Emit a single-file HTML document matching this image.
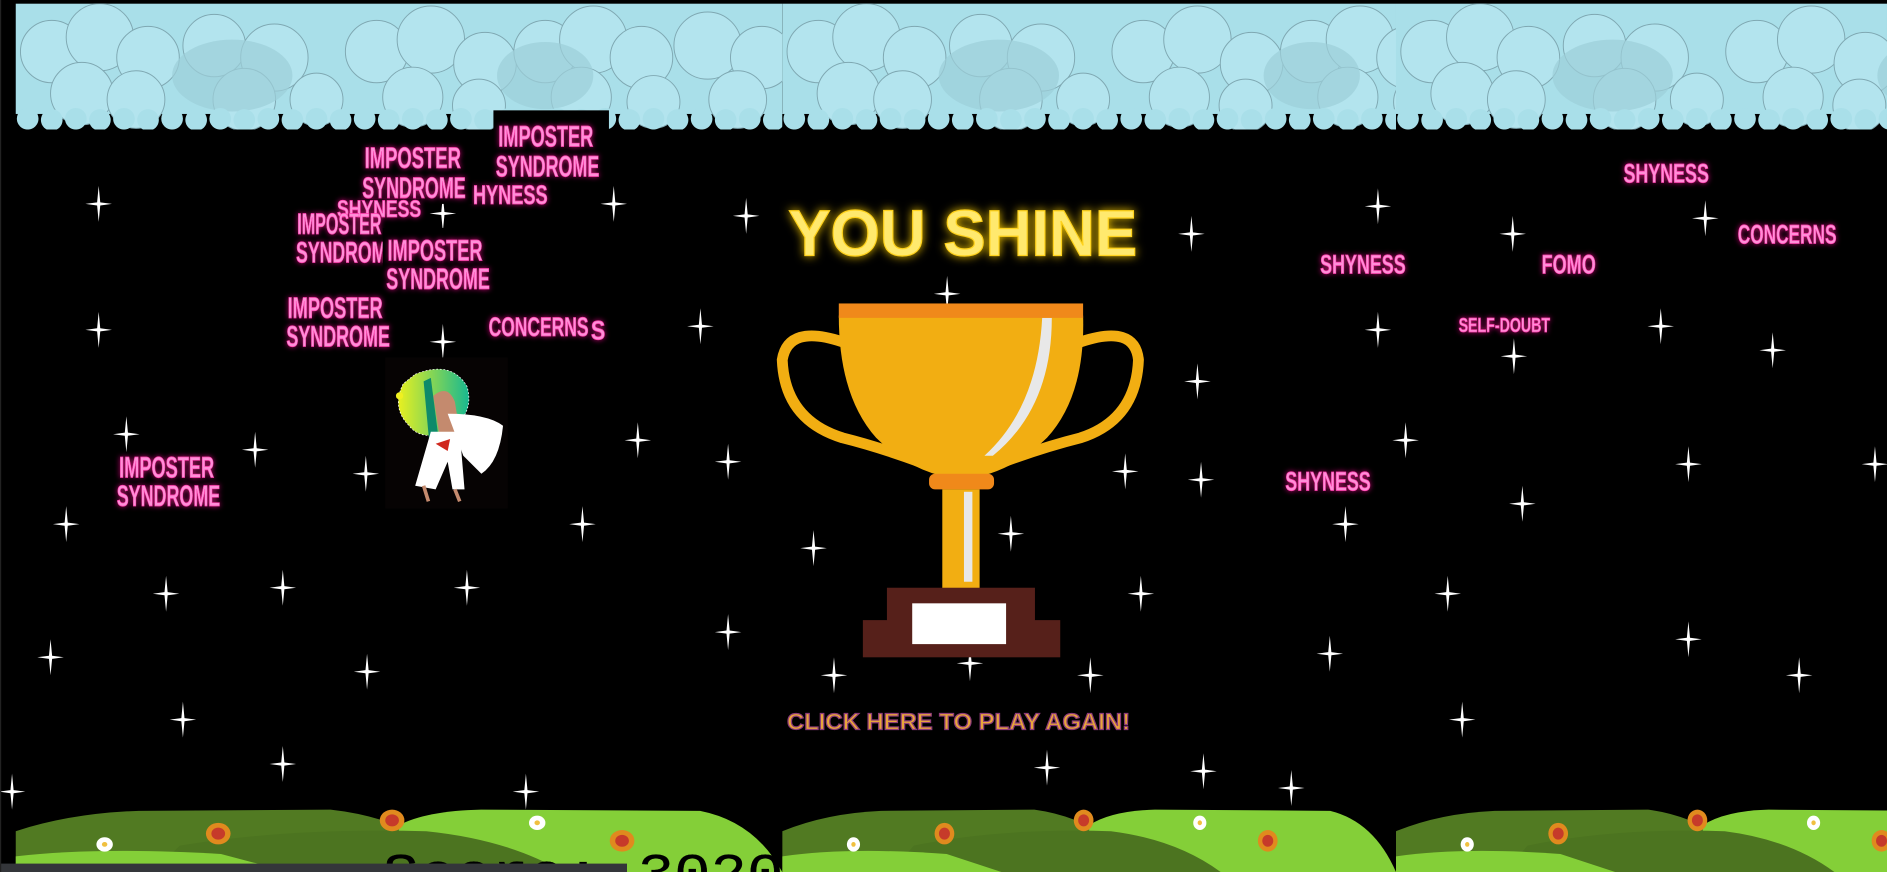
<!DOCTYPE html>
<html><head><meta charset="utf-8"><style>
html,body{margin:0;padding:0;background:#000;overflow:hidden}
svg{display:block}
.p{font-family:"Liberation Sans Narrow","Liberation Sans",sans-serif;font-weight:bold;fill:#ff8fd8;stroke:#ff3fae;stroke-width:.6;filter:url(#pg)}
</style></head><body>
<svg width="1887" height="872" viewBox="0 0 1568 727" preserveAspectRatio="none" xmlns="http://www.w3.org/2000/svg">
<defs>
<filter id="pg" x="-20%" y="-40%" width="140%" height="180%"><feGaussianBlur in="SourceGraphic" stdDeviation="2.2" result="b"/><feFlood flood-color="#ff1493" flood-opacity=".8"/><feComposite in2="b" operator="in" result="g"/><feMerge><feMergeNode in="g"/><feMergeNode in="SourceGraphic"/></feMerge></filter>
<filter id="yg" x="-20%" y="-50%" width="140%" height="200%"><feGaussianBlur in="SourceGraphic" stdDeviation="4" result="b"/><feFlood flood-color="#ffd000" flood-opacity=".9"/><feComposite in2="b" operator="in" result="g"/><feMerge><feMergeNode in="g"/><feMergeNode in="SourceGraphic"/></feMerge></filter>
<path id="st" d="M0,-15 L1.3,-1.3 L11,0 L1.3,1.3 L0,15 L-1.3,1.3 L-11,0 L-1.3,-1.3Z" fill="#fff"/>
<g id="cl">
 <rect x="0" y="0" width="640" height="92" fill="#a9dfe9"/>
 <g fill="#b3e4ee" stroke="#7fa8b2" stroke-width=".8">
 <circle cx="30" cy="40" r="26"/><circle cx="70" cy="28" r="28"/><circle cx="110" cy="45" r="26"/><circle cx="55" cy="75" r="26"/><circle cx="100" cy="80" r="24"/>
 <circle cx="165" cy="35" r="26"/><circle cx="215" cy="45" r="28"/><circle cx="190" cy="80" r="26"/><circle cx="250" cy="80" r="22"/>
 <circle cx="300" cy="40" r="26"/><circle cx="345" cy="30" r="28"/><circle cx="390" cy="50" r="26"/><circle cx="330" cy="78" r="25"/><circle cx="385" cy="85" r="22"/>
 <circle cx="440" cy="40" r="26"/><circle cx="480" cy="30" r="28"/><circle cx="520" cy="45" r="26"/><circle cx="470" cy="78" r="25"/><circle cx="530" cy="82" r="22"/>
 <circle cx="575" cy="35" r="28"/><circle cx="620" cy="45" r="26"/><circle cx="600" cy="80" r="24"/>
 </g>
 <g fill="#9ccfd8" opacity=".7"><ellipse cx="180" cy="60" rx="50" ry="30"/><ellipse cx="440" cy="60" rx="40" ry="28"/></g>
 <g fill="#a9dfe9"><circle cx="10" cy="96" r="9"/><circle cx="30" cy="97" r="9"/><circle cx="50" cy="96" r="9"/><circle cx="70" cy="97" r="9"/><circle cx="90" cy="96" r="9"/><circle cx="110" cy="97" r="9"/><circle cx="130" cy="96" r="9"/><circle cx="150" cy="97" r="9"/><circle cx="170" cy="96" r="9"/><circle cx="190" cy="97" r="9"/><circle cx="210" cy="96" r="9"/><circle cx="230" cy="97" r="9"/><circle cx="250" cy="96" r="9"/><circle cx="270" cy="97" r="9"/><circle cx="290" cy="96" r="9"/><circle cx="310" cy="97" r="9"/><circle cx="330" cy="96" r="9"/><circle cx="350" cy="97" r="9"/><circle cx="370" cy="96" r="9"/><circle cx="390" cy="97" r="9"/><circle cx="410" cy="96" r="9"/><circle cx="430" cy="97" r="9"/><circle cx="450" cy="96" r="9"/><circle cx="470" cy="97" r="9"/><circle cx="490" cy="96" r="9"/><circle cx="510" cy="97" r="9"/><circle cx="530" cy="96" r="9"/><circle cx="550" cy="97" r="9"/><circle cx="570" cy="96" r="9"/><circle cx="590" cy="97" r="9"/><circle cx="610" cy="96" r="9"/><circle cx="630" cy="97" r="9"/></g>
</g>
<g id="gr">
 <path d="M0,693 Q40,678 90,676 L230,675 Q270,680 300,700 L300,727 L0,727Z" fill="#517a22"/>
 <path d="M280,727 L280,688 Q300,676 340,675 L500,676 Q540,685 560,727Z" fill="#84cf38"/>
 <path d="M100,727 L120,705 Q200,690 300,693 Q360,700 400,727Z" fill="#4c7420"/>
 <path d="M0,727 L0,714 Q60,706 150,712 L200,727Z" fill="#84cf38"/>
 <g><circle cx="148" cy="695" r="9" fill="#e08a1e"/><circle cx="148" cy="695" r="5" fill="#c63a2a"/>
 <circle cx="275" cy="684" r="9" fill="#e08a1e"/><circle cx="275" cy="684" r="5" fill="#c63a2a"/>
 <circle cx="443" cy="701" r="9" fill="#e08a1e"/><circle cx="443" cy="701" r="5" fill="#c63a2a"/>
 <circle cx="65" cy="704" r="6" fill="#fff"/><circle cx="65" cy="704" r="2" fill="#f0c040"/>
 <circle cx="381" cy="686" r="6" fill="#fff"/><circle cx="381" cy="686" r="2" fill="#f0c040"/></g>
</g>
</defs>
<rect width="1568" height="727" fill="#000"/>
<svg x="13" y="3" width="637" height="105" viewBox="0 0 637 105"><use href="#cl"/></svg>
<svg x="650" y="3" width="510" height="105" viewBox="0 0 510 105"><use href="#cl"/></svg>
<svg x="1160" y="3" width="408" height="105" viewBox="0 0 408 105"><use href="#cl"/></svg>
<g>
<use href="#st" x="82" y="170"/><use href="#st" x="82" y="275"/><use href="#st" x="55" y="437"/><use href="#st" x="138" y="495"/><use href="#st" x="42" y="548"/><use href="#st" x="152" y="600"/><use href="#st" x="235" y="637"/><use href="#st" x="235" y="490"/><use href="#st" x="304" y="395"/><use href="#st" x="305" y="560"/><use href="#st" x="388" y="490"/><use href="#st" x="484" y="437"/><use href="#st" x="530" y="367"/><use href="#st" x="605" y="385"/><use href="#st" x="510" y="170"/><use href="#st" x="368" y="285"/><use href="#st" x="620" y="180"/><use href="#st" x="990" y="195"/><use href="#st" x="995" y="318"/><use href="#st" x="935" y="393"/><use href="#st" x="948" y="495"/><use href="#st" x="840" y="445"/><use href="#st" x="676" y="457"/><use href="#st" x="605" y="527"/><use href="#st" x="693" y="563"/><use href="#st" x="806" y="553"/><use href="#st" x="906" y="563"/><use href="#st" x="1145" y="172"/><use href="#st" x="1145" y="275"/><use href="#st" x="1257" y="195"/><use href="#st" x="1417" y="182"/><use href="#st" x="1473" y="292"/><use href="#st" x="1380" y="272"/><use href="#st" x="1168" y="367"/><use href="#st" x="1118" y="437"/><use href="#st" x="1265" y="420"/><use href="#st" x="1403" y="387"/><use href="#st" x="1558" y="387"/><use href="#st" x="1203" y="495"/><use href="#st" x="1105" y="545"/><use href="#st" x="1403" y="533"/><use href="#st" x="1495" y="563"/><use href="#st" x="1215" y="600"/><use href="#st" x="1258" y="297"/><use href="#st" x="10" y="660"/><use href="#st" x="437" y="660"/><use href="#st" x="1073" y="657"/><use href="#st" x="582" y="272"/><use href="#st" x="212" y="375"/><use href="#st" x="105" y="362"/><use href="#st" x="787" y="245"/><use href="#st" x="368" y="178"/><use href="#st" x="998" y="400"/><use href="#st" x="870" y="640"/><use href="#st" x="1000" y="643"/>
</g>
<svg x="13" y="0" width="637" height="727" viewBox="0 0 560 727" preserveAspectRatio="none"><use href="#gr"/></svg>
<svg x="650" y="0" width="510" height="727" viewBox="0 0 560 727" preserveAspectRatio="none"><use href="#gr"/></svg>
<svg x="1160" y="0" width="408" height="727" viewBox="0 0 448 727" preserveAspectRatio="none"><use href="#gr"/></svg>
<text x="655" y="213" font-family="Liberation Sans, sans-serif" font-weight="bold" font-size="54" textLength="290" lengthAdjust="spacingAndGlyphs" fill="#ffe96e" stroke="#ffd21a" stroke-width="1" filter="url(#yg)">YOU SHINE</text>
<path d="M700,285 Q655,270 650,300 Q652,350 700,365 Q740,375 790,395" fill="none" stroke="#f2ae12" stroke-width="9" stroke-linecap="round"/>
<path d="M898,285 Q943,270 946,300 Q944,350 898,365 Q858,375 808,395" fill="none" stroke="#f2ae12" stroke-width="9" stroke-linecap="round"/>
<path d="M697,263 L900,263 Q902,330 870,365 Q840,395 799,400 Q758,395 728,365 Q697,330 697,263Z" fill="#f2ae12"/>
<path d="M866,265 L874,265 Q874,340 825,380 L818,380 Q862,340 866,265Z" fill="#e8e8e8"/>
<rect x="697" y="253" width="203" height="12" fill="#f0891a"/>
<rect x="772" y="395" width="54" height="13" rx="5" fill="#f0891a"/>
<rect x="783" y="408" width="31" height="84" fill="#f2ae12"/>
<rect x="801" y="410" width="7" height="75" fill="#e8e8e8"/>
<rect x="737" y="490" width="123" height="30" fill="#56201a"/>
<rect x="717" y="517" width="164" height="31" fill="#56201a"/>
<rect x="758" y="503" width="78" height="34" fill="#fff"/>
<text x="654" y="608" font-family="Liberation Sans, sans-serif" font-weight="bold" font-size="19" textLength="285" lengthAdjust="spacingAndGlyphs" fill="#e8a63a" stroke="#8e3c78" stroke-width="1">CLICK HERE TO PLAY AGAIN!</text>
<rect x="320" y="298" width="102" height="126" fill="#060303"/>
<defs><linearGradient id="bl" x1="0" x2="1"><stop offset="0" stop-color="#e8f020"/><stop offset="1" stop-color="#18b890"/></linearGradient></defs>
<path d="M345,312 Q375,300 388,322 Q395,345 372,360 Q350,368 340,355 Q325,340 335,320Z" fill="url(#bl)" stroke="#fff" stroke-width=".6" stroke-dasharray="1.5 1.5"/>
<circle cx="332" cy="330" r="3" fill="#f0f020"/>
<path d="M360,330 Q372,320 378,335 L382,360 L365,362Z" fill="#c48a6e"/>
<path d="M352,318 L358,315 L365,370 L357,372Z" fill="#0e8a6a"/>
<path d="M372,345 Q405,345 418,355 Q415,385 400,395 L385,380Z" fill="#fff"/>
<path d="M358,360 L382,360 L386,408 L376,408 L372,385 L362,408 L345,405Z" fill="#fff"/>
<path d="M362,370 L374,366 L372,376Z" fill="#d0281e"/>
<path d="M352,405 L356,418 M378,408 L382,418" stroke="#c48a6e" stroke-width="3"/>
<!-- words, layered -->
<rect x="410" y="92" width="96" height="68" fill="#000"/>
<g class="p" font-size="25"><text x="393" y="170" textLength="62" lengthAdjust="spacingAndGlyphs" font-size="22">HYNESS</text></g>
<rect x="300" y="112" width="92" height="58" fill="#000"/>
<g class="p" font-size="25">
<text x="303" y="140" textLength="80" lengthAdjust="spacingAndGlyphs">IMPOSTER</text>
<text x="301" y="165" textLength="86" lengthAdjust="spacingAndGlyphs">SYNDROME</text>
<text x="414" y="122" textLength="79" lengthAdjust="spacingAndGlyphs">IMPOSTER</text>
<text x="412" y="147" textLength="86" lengthAdjust="spacingAndGlyphs">SYNDROME</text>
</g>
<rect x="278" y="166" width="72" height="18" fill="#000"/>
<g class="p" font-size="25"><text x="280" y="181" textLength="70" lengthAdjust="spacingAndGlyphs" font-size="20">SHYNESS</text>
<text x="247" y="195" textLength="70" lengthAdjust="spacingAndGlyphs">IMPOSTER</text>
<text x="246" y="219" textLength="75" lengthAdjust="spacingAndGlyphs">SYNDROM</text></g>
<rect x="318" y="190" width="94" height="55" fill="#000"/>
<g class="p" font-size="25">
<text x="322" y="217" textLength="79" lengthAdjust="spacingAndGlyphs">IMPOSTER</text>
<text x="321" y="241" textLength="86" lengthAdjust="spacingAndGlyphs">SYNDROME</text>
<text x="239" y="265" textLength="79" lengthAdjust="spacingAndGlyphs">IMPOSTER</text>
<text x="238" y="289" textLength="86" lengthAdjust="spacingAndGlyphs">SYNDROME</text>
<text x="406" y="280" textLength="83" lengthAdjust="spacingAndGlyphs" font-size="22">CONCERNS</text>
<text x="491" y="283" textLength="12" lengthAdjust="spacingAndGlyphs" font-size="22">S</text>
<text x="99" y="398" textLength="79" lengthAdjust="spacingAndGlyphs">IMPOSTER</text>
<text x="97" y="422" textLength="86" lengthAdjust="spacingAndGlyphs">SYNDROME</text>
<text x="1349" y="152" textLength="71" lengthAdjust="spacingAndGlyphs" font-size="22">SHYNESS</text>
<text x="1444" y="203" textLength="82" lengthAdjust="spacingAndGlyphs" font-size="22">CONCERNS</text>
<text x="1097" y="228" textLength="71" lengthAdjust="spacingAndGlyphs" font-size="22">SHYNESS</text>
<text x="1281" y="228" textLength="45" lengthAdjust="spacingAndGlyphs" font-size="22">FOMO</text>
<text x="1212" y="277" textLength="76" lengthAdjust="spacingAndGlyphs" font-size="17">SELF-DOUBT</text>
<text x="1068" y="409" textLength="71" lengthAdjust="spacingAndGlyphs" font-size="22">SHYNESS</text>
</g>
<text x="318" y="742" font-family="Liberation Mono, monospace" font-size="44" textLength="333" lengthAdjust="spacingAndGlyphs" fill="#000" stroke="#000" stroke-width=".3">Score: 3020</text>
<rect x="0" y="720" width="521" height="7" fill="#34363a"/>
<rect x="0" y="0" width="1" height="727" fill="#222"/>
</svg>
</body></html>
